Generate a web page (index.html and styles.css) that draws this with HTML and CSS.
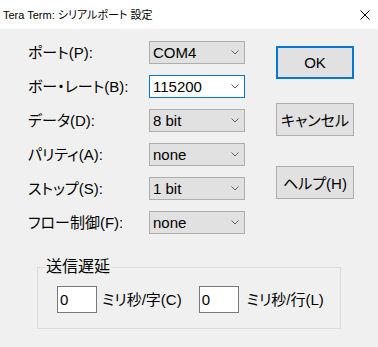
FILE: index.html
```html
<!DOCTYPE html>
<html lang="ja">
<head>
  <meta charset="UTF-8" />
  <meta name="viewport" content="width=device-width, initial-scale=1.0" />
  <title>Tera Term: シリアルポート 設定</title>
  <link rel="stylesheet" href="styles.css">
</head>
<body>
  <div class="window">
    <div class="titlebar">
      <span class="title">Tera Term: シリアルポート 設定</span>
      <span class="close">
        <svg width="10" height="10" viewBox="0 0 10 10"><path d="M0.5 0.5 L9.5 9.5 M9.5 0.5 L0.5 9.5" stroke="#000" stroke-width="1" fill="none"/></svg>
      </span>
    </div>

    <div class="dialog">
      <div class="main">
        <div class="fields">
          <label>ポート(P):</label>
          <div class="combo"><span>COM4</span><svg class="chev" width="8" height="5" viewBox="0 0 8 5"><path d="M0.5 0.5 L4 4 L7.5 0.5" stroke="#606060" fill="none"/></svg></div>

          <label>ボー・レート(B):</label>
          <div class="combo focus"><span>115200</span><svg class="chev" width="8" height="5" viewBox="0 0 8 5"><path d="M0.5 0.5 L4 4 L7.5 0.5" stroke="#606060" fill="none"/></svg></div>

          <label>データ(D):</label>
          <div class="combo"><span>8 bit</span><svg class="chev" width="8" height="5" viewBox="0 0 8 5"><path d="M0.5 0.5 L4 4 L7.5 0.5" stroke="#606060" fill="none"/></svg></div>

          <label>パリティ(A):</label>
          <div class="combo"><span>none</span><svg class="chev" width="8" height="5" viewBox="0 0 8 5"><path d="M0.5 0.5 L4 4 L7.5 0.5" stroke="#606060" fill="none"/></svg></div>

          <label>ストップ(S):</label>
          <div class="combo"><span>1 bit</span><svg class="chev" width="8" height="5" viewBox="0 0 8 5"><path d="M0.5 0.5 L4 4 L7.5 0.5" stroke="#606060" fill="none"/></svg></div>

          <label>フロー制御(F):</label>
          <div class="combo"><span>none</span><svg class="chev" width="8" height="5" viewBox="0 0 8 5"><path d="M0.5 0.5 L4 4 L7.5 0.5" stroke="#606060" fill="none"/></svg></div>
        </div>

        <div class="buttons">
          <button class="btn default">OK</button>
          <button class="btn cancel">キャンセル</button>
          <button class="btn help">ヘルプ(H)</button>
        </div>
      </div>

      <fieldset class="delay">
        <legend>送信遅延</legend>
        <div class="delay-row">
          <input class="edit" type="text" value="0" />
          <span class="unit">ミリ秒/字(C)</span>
          <input class="edit second" type="text" value="0" />
          <span class="unit">ミリ秒/行(L)</span>
        </div>
      </fieldset>
    </div>
  </div>
</body>
</html>
```

FILE: styles.css
```css
body {
  margin: 0;
  background: #f0f0f0;
  font-family: "Liberation Sans", "Noto Sans CJK JP", sans-serif;
  color: #000;
}
.window {
  width: 378px;
  height: 347px;
  overflow: hidden;
}
.titlebar {
  height: 29px;
  background: #fff;
  display: flex;
  align-items: center;
  justify-content: space-between;
  font-size: 11px;
  font-feature-settings: "palt";
}
.title {
  padding-left: 3px;
  line-height: 14px;
}
.close {
  display: flex;
  margin-right: 8px;
}
.dialog {
  padding: 12px 0 0 28px;
  font-size: 15px;
  font-feature-settings: "palt";
}
.main {
  display: flex;
}
.fields {
  display: grid;
  grid-template-columns: 121px 96px;
  grid-auto-rows: 23px;
  row-gap: 11px;
  align-items: center;
}
.fields label {
  line-height: 18px;
}
.combo {
  box-sizing: border-box;
  height: 23px;
  border: 1px solid #adadad;
  background: #e1e1e1;
  display: flex;
  align-items: center;
  justify-content: space-between;
  padding: 0 5px 0 3px;
  line-height: 18px;
}
.combo.focus {
  background: #fff;
  border-color: #0078d7;
}
.buttons {
  display: flex;
  flex-direction: column;
  margin-left: 31px;
  padding-top: 5px;
}
.btn {
  box-sizing: border-box;
  width: 78px;
  height: 33px;
  border: 1px solid #adadad;
  background: #e1e1e1;
  font: inherit;
  font-feature-settings: "palt";
  padding: 0;
}
.btn.default {
  border: 2px solid #0078d7;
}
.btn.cancel {
  margin-top: 24px;
}
.btn.help {
  margin-top: 30px;
}
.delay {
  margin: 25px 0 0 9px;
  width: 304px;
  box-sizing: border-box;
  border: 1px solid #dcdcdc;
  padding: 11px 0 15px 19px;
}
.delay legend {
  margin-left: -12px;
  padding: 0 1px;
  line-height: 16px;
  font-size: 16px;
}
.delay-row {
  display: flex;
  align-items: center;
}
.edit {
  box-sizing: border-box;
  width: 40px;
  height: 27px;
  border: 1px solid #7a7a7a;
  background: #fff;
  font: inherit;
  padding: 0 0 0 2px;
  margin: 0;
}
.unit {
  margin-left: 5px;
  line-height: 18px;
}
.edit.second {
  margin-left: 17px;
}
.edit.second + .unit {
  margin-left: 8px;
}
```
